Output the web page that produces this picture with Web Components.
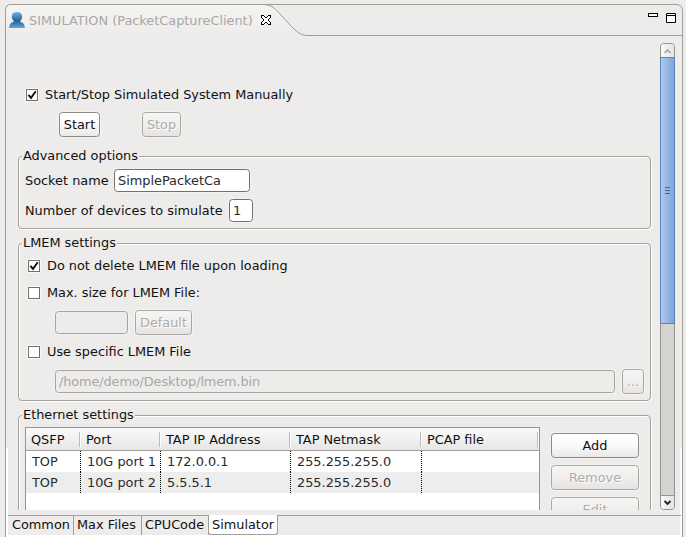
<!DOCTYPE html>
<html lang="en"><head><meta charset="utf-8"><title>Simulation</title>
<style>
html,body{margin:0;width:686px;height:537px;overflow:hidden;background:#edeceb}
body{font:12.87px/15px "DejaVu Sans",sans-serif;color:#111}
</style></head><body>
<sim-window>
  <view-header slot="header">SIMULATION (PacketCaptureClient)</view-header>
  <sim-form slot="form"></sim-form>
  <scroll-bar slot="scroll"></scroll-bar>
  <page-tabs slot="tabs"></page-tabs>
</sim-window>
<script>
function define(name, html){
  customElements.define(name, class extends HTMLElement{
    constructor(){
      super();
      const t=document.createElement('template');
      t.innerHTML=html;
      this.attachShadow({mode:'open'}).appendChild(t.content.cloneNode(true));
    }
  });
}
define('check-box',`<style>
:host{display:flex;height:15px;gap:7px;white-space:nowrap}
svg{display:block;flex:none;width:12px;height:12px;margin-top:2px;background:#fff;box-shadow:0 0 0 1px #f8f8f7}
path{display:none}:host([checked]) path{display:block}
</style><svg viewBox="0 0 12 12"><rect x=".5" y=".5" width="11" height="11" fill="#fff" stroke="#72706d"/><path d="M2.4 5.9L5 8.9L9.8 2.2" fill="none" stroke="#111" stroke-width="1.9"/></svg><span><slot></slot></span>`);
define('push-button',`<style>
:host{display:block;box-sizing:border-box;flex:none;height:25px;border:1px solid #8b8986;border-radius:3.5px;background:linear-gradient(#fff,#fbfbfb 45%,#eae9e8);text-align:center;line-height:15px;padding-top:4px;color:#111;box-shadow:0 0 0 1px #f4f3f2;white-space:nowrap}
:host([disabled]){border-color:#a9a7a4;background:linear-gradient(#f5f5f4,#f0efee 50%,#e5e4e2);color:#aeaba8;text-shadow:1px 1px #fff}
</style><slot></slot>`);
define('text-field',`<style>
:host{display:block;box-sizing:border-box;flex:none;height:23px;border:1px solid #72706d;border-radius:3.5px;background:#fff;padding:3px 0 0 3px;color:#2a2a2a;box-shadow:0 0 0 1px #f3f2f1;white-space:nowrap}
:host([disabled]){background:#edeceb;color:#aaa7a4;border-color:#a5a3a0;letter-spacing:-.1px}
</style><slot></slot>`);
define('group-box',`<style>
:host{display:block;box-sizing:border-box;width:633px;flex:none;border:1px solid #a3a19e;border-radius:4px;box-shadow:1px 1px #fff,inset 1px 1px #fff}
.title{width:max-content;margin:-9px 0 0 3px;height:16px;padding:0 1px;background:#edeceb}
</style><div class="title"><slot name="title"></slot></div><slot></slot>`);
define('view-header',`<style>
:host{display:block;position:relative;height:36px;color:#a9a6a3}
.frame{position:absolute;left:0;top:0}
.label{display:flex;align-items:flex-start;position:relative;padding:13px 0 0 9px}
.label svg{flex:none}.label span{margin-left:4px;width:224px;white-space:nowrap}
.close{margin:1px 0 0 7px}
</style>
<svg class="frame" width="686" height="36" viewBox="0 0 686 36"><defs><linearGradient id="g" x2="0" y2="1"><stop stop-color="#f4f4f3"/><stop offset="1" stop-color="#edeceb"/></linearGradient></defs>
<path d="M5.5 36V10L7 7L10 4.5H264C273 5 276 10 281 15L290 25C296 31 300 35.5 308 35.5Z" fill="url(#g)"/>
<path d="M5.5 36V10Q5.5 4.5 11 4.5H676Q682.5 4.5 682.5 11V36M264 4.5C273 5 276 10 281 15L290 25C296 31 300 35.5 308 35.5H682" fill="none" stroke="#a09e9b"/>
<rect x="648.5" y="13.5" width="9" height="3" fill="#fff" stroke="#000"/><path d="M666.5 13.5h9v9h-9zM666.5 15.5h9" fill="#fff" stroke="#000"/></svg>
<div class="label"><svg width="16" height="16" viewBox="0 0 16 16" style="margin-top:-1px"><defs><linearGradient id="p" x2="0" y2="1"><stop stop-color="#73b0e4"/><stop offset=".55" stop-color="#25638f"/><stop offset="1" stop-color="#5ea6e0"/></linearGradient></defs><path d="M8 0C11.5 0 13.2 2 13.2 4.8C13.2 7 12 8.5 10.8 9.5C13.5 10.2 15.8 12 15.9 16H.1C.2 12 2.5 10.2 5.2 9.5C4 8.5 2.8 7 2.8 4.8C2.8 2 4.5 0 8 0Z" fill="url(#p)"/></svg><span><slot></slot></span>
<svg class="close" width="12" height="12" viewBox="0 0 12 12"><path d="M1.5 1.5H3.5L5.5 3.5H6.5L8.5 1.5H10.5V3.5L8.5 5.5V6.5L10.5 8.5V10.5H8.5L6.5 8.5H5.5L3.5 10.5H1.5V8.5L3.5 6.5V5.5L1.5 3.5Z" fill="#fff" stroke="#000" shape-rendering="crispEdges"/></svg></div>`);
define('device-table',`<style>
:host{display:block;box-sizing:border-box;width:515px;height:100px;border:1px solid #95938f;background:#fff;color:#2a2a2a}
.r{display:grid;grid-template-columns:55px 80px 130px 131px 1fr;height:21px;white-space:nowrap}
.h{height:22px;background:linear-gradient(#fafafa,#e7e6e5);border-bottom:1px solid #a09e9b;color:#111}
.h div{margin:4px 0 3px;padding-left:5px;border-right:1px solid #bdbbb8;box-shadow:1px 0 #fff;margin-right:1px}
.h div:last-child{margin-right:1px}
.b div{padding:3px 0 0 6px}
.b div:not(:last-child){background:repeating-linear-gradient(#000 0 1px,transparent 1px 2px) right top/1px 100% no-repeat}
.e{background:#ededed}
</style><div class="r h"><div>QSFP</div><div>Port</div><div>TAP IP Address</div><div>TAP Netmask</div><div>PCAP file</div></div>
<div class="r b"><div>TOP</div><div>10G port 1</div><div>172.0.0.1</div><div>255.255.255.0</div><div></div></div>
<div class="r b e"><div>TOP</div><div>10G port 2</div><div>5.5.5.1</div><div>255.255.255.0</div><div></div></div>`);
define('sim-form',`<style>
:host{display:flex;flex-direction:column;box-sizing:border-box;width:652px;height:474px;padding:51px 0 0 18px;overflow:hidden}
.row{display:flex;align-items:flex-start;white-space:nowrap}
.label{padding-top:4px}
</style>
<check-box checked style="margin-left:8px">Start/Stop Simulated System Manually</check-box>
<div class="row" style="margin:10px 0 19px 41px;gap:42px"><push-button style="width:41px">Start</push-button><push-button disabled style="width:39px">Stop</push-button></div>
<group-box style="height:73px;margin-bottom:14px"><span slot="title">Advanced options</span>
 <div class="row" style="margin:5px 0 7px 6px"><span class="label" style="width:89px">Socket name</span><text-field style="width:136px">SimplePacketCa</text-field></div>
 <div class="row" style="margin-left:6px"><span class="label" style="width:204px">Number of devices to simulate</span><text-field style="width:24px">1</text-field></div>
</group-box>
<group-box style="height:158px;margin-bottom:14px"><span slot="title">LMEM settings</span>
 <check-box checked style="margin:7px 0 12px 9px">Do not delete LMEM file upon loading</check-box>
 <check-box style="margin-left:9px">Max. size for LMEM File:</check-box>
 <div class="row" style="margin:10px 0 9px 36px;gap:7px"><text-field disabled style="width:73px;margin-top:1px"></text-field><push-button disabled style="width:57px">Default</push-button></div>
 <check-box style="margin-left:9px">Use specific LMEM File</check-box>
 <div class="row" style="margin:10px 0 0 36px;gap:7px"><text-field disabled style="width:560px;margin-top:1px">/home/demo/Desktop/lmem.bin</text-field><push-button disabled style="width:22px">...</push-button></div>
</group-box>
<group-box style="height:150px"><span slot="title">Ethernet settings</span>
 <div class="row" style="margin:4px 0 0 6px;gap:11px"><device-table></device-table><div style="display:grid;gap:7px;margin-top:6px;width:88px"><push-button>Add</push-button><push-button disabled>Remove</push-button><push-button disabled>Edit</push-button></div></div>
</group-box>`);
define('scroll-bar',`<style>
:host{display:flex;flex-direction:column;box-sizing:border-box;width:15px;height:467px;margin-top:7px;border:1px solid #95938f;border-radius:4px;background:#d5d3d1}
svg{display:block;flex:none}
.u,.d{background:linear-gradient(90deg,#fafafa,#e4e3e1)}
.u{border-radius:3px 3px 0 0}
.thumb{box-sizing:border-box;height:267px;margin:0 -1px;border:1px solid #5b84b8;background:linear-gradient(90deg,#abc9ec,#7fa6d9);display:flex;align-items:center;justify-content:center;flex:none}
.d{margin-top:auto;border-top:1px solid #95938f;border-radius:0 0 3px 3px}
</style><svg class="u" width="13" height="13"><path d="M3.5 9L6.5 6L9.5 9" fill="none" stroke="#a8a6a3" stroke-width="1.6"/></svg>
<div class="thumb"><svg width="5" height="7"><path d="M0 .5h5M0 3.5h5M0 6.5h5" stroke="#48689a"/></svg></div>
<svg class="d" width="13" height="13"><path d="M3.5 5L6.5 8L9.5 5" fill="none" stroke="#222" stroke-width="1.8"/></svg>`);
define('page-tabs',`<style>
:host{display:flex;box-sizing:border-box;width:673px;height:20px;border-top:1px solid #a09e9b;white-space:nowrap}
div{box-sizing:border-box;height:19px;padding:1px 0 0 3px;border-right:1px solid #a09e9b}
.s{background:#fff;border:1px solid #a09e9b;border-top:0;border-radius:0 0 3px 3px;margin-left:-1px;padding-left:3px;margin-top:-1px;height:20px;padding-top:2px}
</style><div style="width:66px;padding-left:4px">Common</div><div style="width:68px">Max Files</div><div style="width:67px">CPUCode</div><div class="s" style="width:70px">Simulator</div>`);
define('sim-window',`<style>
:host{display:block;width:686px;height:537px;overflow:hidden}
.body{box-sizing:border-box;margin-left:5px;width:678px;height:501px;border:solid #a09e9b;border-width:0 1px;background:linear-gradient(#edeceb,#edeceb) 2px 0/672px 499px no-repeat,linear-gradient(#edeceb 412px,#fff 412px)}
.main{display:flex;height:479px;gap:8px;margin-left:-6px}
.tabs{margin-left:2px}
</style><slot name="header"></slot><div class="body"><div class="main"><slot name="form"></slot><slot name="scroll"></slot></div><div class="tabs"><slot name="tabs"></slot></div></div>`);
</script></body></html>
